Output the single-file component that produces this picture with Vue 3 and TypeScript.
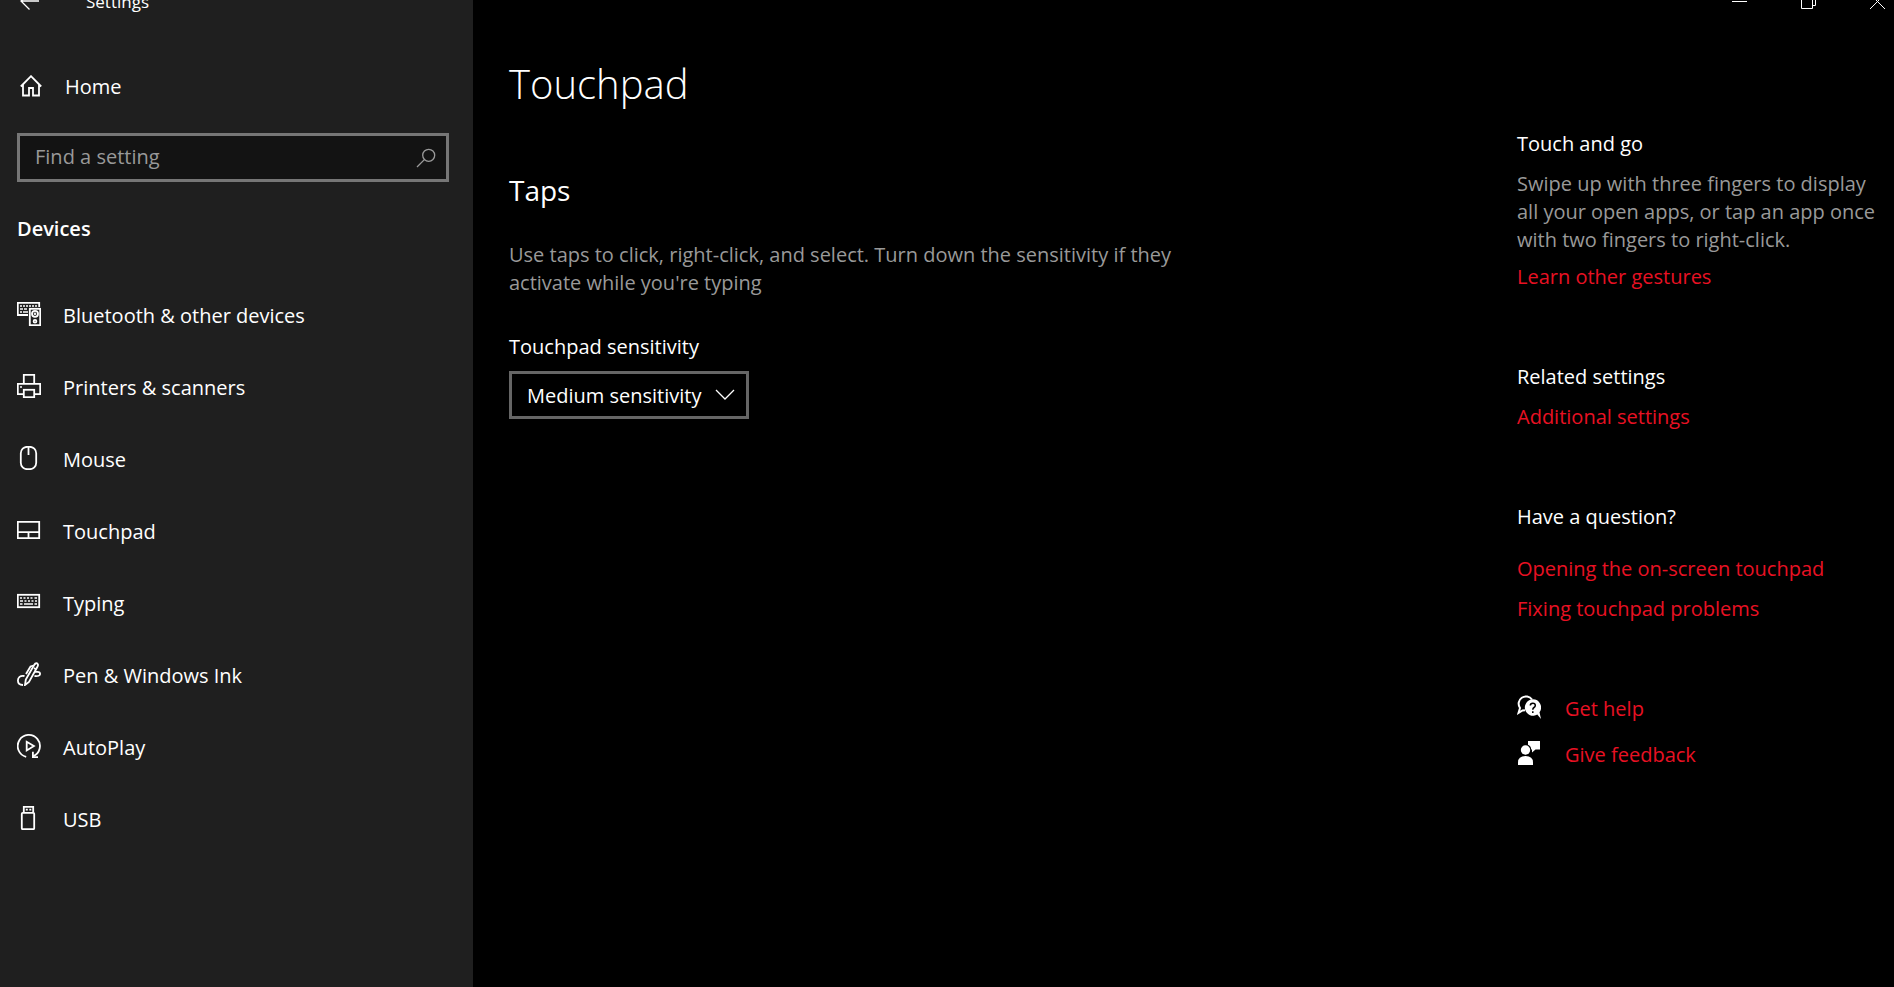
<script setup lang="ts">
import { ref } from 'vue'

type IconName = 'bluetooth' | 'printer' | 'mouse' | 'touchpad' | 'typing' | 'pen' | 'autoplay' | 'usb'

interface NavItem {
  icon: IconName
  label: string
}

const query = ref('')
const sensitivity = ref('Medium sensitivity')

const navItems: NavItem[] = [
  { icon: 'bluetooth', label: 'Bluetooth & other devices' },
  { icon: 'printer', label: 'Printers & scanners' },
  { icon: 'mouse', label: 'Mouse' },
  { icon: 'touchpad', label: 'Touchpad' },
  { icon: 'typing', label: 'Typing' },
  { icon: 'pen', label: 'Pen & Windows Ink' },
  { icon: 'autoplay', label: 'AutoPlay' },
  { icon: 'usb', label: 'USB' },
]

const sensitivities: string[] = [
  'Most sensitive',
  'High sensitivity',
  'Medium sensitivity',
  'Low sensitivity',
]
</script>

<template>
  <div class="window">
    <aside class="sidebar">
      <header class="caption">
        <button class="back" type="button" aria-label="Back">
          <svg width="20" height="18" viewBox="0 0 20 18" class="thin"><path d="M19 9H1M9.500 .5L1 9l8.500 8.500" /></svg>
        </button>
        <span class="app-name">Settings</span>
      </header>

      <a class="home" href="#home">
        <svg width="22" height="22" viewBox="0 0 22 22" class="line">
          <path d="M.8 11.500L11 1.200l10.200 10.300M3 9.500V20.500h6V13h4v7.500h6V9.500" />
        </svg>
        <span>Home</span>
      </a>

      <div class="search">
        <input v-model="query" type="text" placeholder="Find a setting" aria-label="Find a setting" />
        <button type="button" aria-label="Search">
          <svg width="20" height="20" viewBox="0 0 20 20" class="thin"><circle cx="12.700" cy="7.300" r="6" /><path d="M8.400 11.600L1 19" /></svg>
        </button>
      </div>

      <h2 class="section">Devices</h2>

      <nav class="nav" aria-label="Devices">
        <a v-for="item in navItems" :key="item.label" :href="'#' + item.icon">
          <svg width="24" height="24" viewBox="0 0 24 24" class="line" aria-hidden="true">
            <g v-if="item.icon === 'bluetooth'">
              <path d="M11 13H.8V.8H22.200V5" />
              <path class="detail" d="M3 4h2M6 4h2M9 4h2M12 4h2M15 4h2M18 4h2M3 7h3M7 7h3M3 10h2M6 10h5" />
              <rect x="12.800" y="6.800" width="10.400" height="16.400" />
              <circle cx="18" cy="11.800" r="3" />
              <circle class="detail" cx="18" cy="11.800" r=".5" />
              <circle cx="18" cy="19.300" r="1.400" />
            </g>
            <g v-else-if="item.icon === 'printer'">
              <path d="M6.800 9.500V.8h10.400v8.700M6.500 20.200H.8V9.800h22.400v10.400h-5.700" />
              <rect x="6.800" y="15.800" width="10.400" height="7.400" />
              <path class="detail" d="M3 13h2" />
            </g>
            <g v-else-if="item.icon === 'mouse'">
              <rect x="3.800" y=".8" width="15.400" height="22.400" rx="6.500" />
              <path d="M11.500 1v8" />
            </g>
            <path v-else-if="item.icon === 'touchpad'" d="M.8 3.800h21.400v16.400H.8zM.8 14.200h21.400M11.500 14.200v6" />
            <g v-else-if="item.icon === 'typing'">
              <rect x=".8" y="4.800" width="21.400" height="12.400" />
              <path class="detail" d="M3 8h2M6.500 8h2M10 8h2M13.500 8h2M17.500 8h2.500M3 11h3M7.500 11h2M11 11h2M14.500 11h2M18 11h2M3 14h2.500M7 14h9M17.500 14h2.500" />
            </g>
            <g v-else-if="item.icon === 'pen'">
              <path d="M8 23l.8-5.500L17 3.200Q18.500.6 20.200 1.400Q21.800 2.400 20.300 5L12 20z" />
              <path d="M16.500 3.500L13.500 4.500L9 12M17 6l2.300 1.400" />
              <path d="M7.500 14C3 13 .9 16 .9 18.500C.9 21.500 3 23 6 23" />
              <path d="M18 9.800h2.500Q23.100 9.800 23.100 12Q23.100 14.500 17.500 14" />
            </g>
            <g v-else-if="item.icon === 'autoplay'">
              <path d="M9.200 22.800A11.100 11.100 0 1 1 16 22.300" />
              <path d="M15.900 17.800V23.100H21" />
              <path d="M9.700 7.800v8.600l7.200-4.300z" />
            </g>
            <g v-else>
              <rect x="4.800" y="6.800" width="12.400" height="16.400" rx="1" />
              <path d="M6.800 6.500V.8h9.400v5.700M8.800 3.700h2M12.300 3.700h2" />
            </g>
          </svg>
          <span>{{ item.label }}</span>
        </a>
      </nav>
    </aside>

    <div class="page">
      <header class="caption controls">
        <button type="button" aria-label="Minimize">
          <svg width="15" height="15" viewBox="0 0 15 15" class="hair"><path d="M0 7.500h15" /></svg>
        </button>
        <button type="button" aria-label="Restore">
          <svg width="15" height="15" viewBox="0 0 15 15" class="hair"><path d="M.5 3.500h11v11H.5zM3.500 3.500V.5h11v11h-3" /></svg>
        </button>
        <button type="button" aria-label="Close">
          <svg width="15" height="15" viewBox="0 0 15 15" class="hair"><path d="M0 0l15 15M15 0L0 15" /></svg>
        </button>
      </header>

      <div class="content">
        <main class="main">
          <h1>Touchpad</h1>
          <h2>Taps</h2>
          <p>Use taps to click, right-click, and select. Turn down the sensitivity if they activate while you're typing</p>
          <label for="sensitivity">Touchpad sensitivity</label>
          <div class="select">
            <select id="sensitivity" v-model="sensitivity">
              <option v-for="level in sensitivities" :key="level">{{ level }}</option>
            </select>
            <svg width="20" height="12" viewBox="0 0 20 12" class="thin" aria-hidden="true"><path d="M1 1l9 9 9-9" /></svg>
          </div>
        </main>

        <aside class="rail">
          <section>
            <h3>Touch and go</h3>
            <p>Swipe up with three fingers to display all your open apps, or tap an app once with two fingers to right-click.</p>
            <a class="after-text" href="#gestures">Learn other gestures</a>
          </section>
          <section>
            <h3>Related settings</h3>
            <a href="#additional">Additional settings</a>
          </section>
          <section class="questions">
            <h3>Have a question?</h3>
            <a href="#on-screen">Opening the on-screen touchpad</a>
            <a href="#problems">Fixing touchpad problems</a>
          </section>
          <section class="support">
            <a href="#help">
              <svg width="24" height="24" viewBox="0 0 24 24" aria-hidden="true">
                <path class="bubble" d="M8 15.200L5.500 15.500L1.500 18L3 13A7.200 7.200 0 1 1 15 4.500" />
                <path class="solid" d="M15.800 4.300a8.200 8.200 0 1 0 4.500 15.200L24 24l-1.500-6.700A8.200 8.200 0 0 0 15.800 4.300z" />
                <path class="mark" d="M13.300 10.500q0-2.300 2.500-2.300t2.500 2.200q0 1.300-1.300 2.100t-1.200 2.200M15.800 16.200v1.800" />
              </svg>
              <span>Get help</span>
            </a>
            <a href="#feedback">
              <svg width="24" height="24" viewBox="0 0 24 24" aria-hidden="true">
                <circle class="solid" cx="8.500" cy="9" r="4.700" />
                <path class="solid" d="M1 24v-2.500Q1 15 8.500 15T16 21.500V24zM11 0h12v8.500h-4.500L15 11.500V8.500h-.8Q14 5 11 3.800z" />
              </svg>
              <span>Give feedback</span>
            </a>
          </section>
        </aside>
      </div>
    </div>
  </div>
</template>

<style>
html,
body {
  background: #000;
}
</style>

<style scoped>
.window {
  display: flex;
  min-height: 100vh;
  overflow: hidden;
  background: #000;
  color: #fff;
  font: 400 20px/28px "Segoe UI", "Open Sans", "Noto Sans", sans-serif;
}

.window * {
  box-sizing: border-box;
}

h1,
h2,
h3,
p {
  margin: 0;
  font-weight: 400;
}

h3 {
  font-size: 20px;
}

a {
  color: #e81123;
  text-decoration: none;
}

button,
input,
select {
  margin: 0;
  padding: 0;
  border: 0;
  border-radius: 0;
  background: none;
  color: inherit;
  font: inherit;
}

svg {
  display: block;
  flex: none;
  fill: none;
  stroke: currentColor;
}

.line {
  stroke-width: 1.8;
}

.detail {
  stroke-width: 1.5;
}

.thin {
  stroke-width: 1.3;
}

.hair {
  stroke-width: 1;
}

/* The caption bar sits partly above the top edge of the window. */
.caption {
  display: flex;
  align-items: center;
  height: 50px;
  margin-top: -24px;
}

.sidebar {
  flex: 0 0 473px;
  padding: 0 24px 0 17px;
  background: #1f1f1f;
}

.back {
  width: 69px;
  padding-left: 3px;
}

.app-name {
  padding-top: 2px;
  font-size: 17px;
}

.home {
  display: flex;
  align-items: center;
  gap: 23px;
  height: 72px;
  margin-top: 24px;
  padding-left: 3px;
  color: #fff;
}

.home span {
  padding-top: 2px;
}

.search {
  display: flex;
  height: 49px;
  margin-top: 11px;
  border: 3px solid #767676;
  background: #131313;
  color: #9a9a9a;
}

.search input {
  flex: 1;
  min-width: 0;
  padding: 0 0 2px 15px;
  outline: 0;
}

.search input::placeholder {
  color: #999;
  opacity: 1;
}

.search button {
  display: grid;
  place-items: center;
  width: 40px;
}

.section {
  margin-top: 33px;
  font-size: 20px;
  font-weight: 600;
}

.nav {
  margin-top: 35px;
}

.nav a {
  display: flex;
  align-items: center;
  gap: 22px;
  height: 72px;
  color: #fff;
}

.nav span {
  padding-top: 3px;
}

.page {
  flex: 1;
  min-width: 0;
}

.controls {
  justify-content: flex-end;
  margin-right: -18px;
}

.controls button {
  display: grid;
  place-items: center;
  width: 69px;
  height: 50px;
}

.content {
  display: flex;
  justify-content: space-between;
  gap: 24px;
}

.main {
  flex: 1;
  max-width: 716px;
  padding: 30px 0 48px 36px;
}

.main h1 {
  font-size: 40px;
  font-weight: 300;
  line-height: 56px;
}

.main h2 {
  margin-top: 58px;
  font-size: 28px;
  line-height: 40px;
}

.main p {
  margin-top: 31px;
  color: #999;
}

.main label {
  display: block;
  margin-top: 36px;
}

.select {
  display: grid;
  align-items: center;
  width: 240px;
  height: 48px;
  margin-top: 10px;
}

.select select,
.select svg {
  grid-area: 1 / 1;
}

.select select {
  width: 100%;
  height: 100%;
  padding: 2px 0 0 15px;
  border: 3px solid #666;
  background: #000;
  appearance: none;
}

.select svg {
  justify-self: end;
  margin-right: 14px;
  pointer-events: none;
}

.rail {
  flex: 0 0 377px;
  padding: 104px 16px 48px 0;
}

.rail section {
  margin-bottom: 72px;
}

.rail h3 {
  margin-bottom: 12px;
}

.rail p {
  color: #999;
}

.rail a {
  display: block;
}

.rail .after-text {
  margin-top: 9px;
}

.rail .questions h3 {
  margin-bottom: 24px;
}

.rail .questions a + a {
  margin-top: 12px;
}

.rail .support a {
  display: flex;
  align-items: flex-start;
  gap: 24px;
  margin-bottom: 18px;
}

.support svg {
  color: #fff;
}

.bubble {
  stroke-width: 2;
}

.solid {
  fill: #fff;
  stroke: none;
}

.mark {
  stroke: #000;
  stroke-width: 1.5;
}
</style>
